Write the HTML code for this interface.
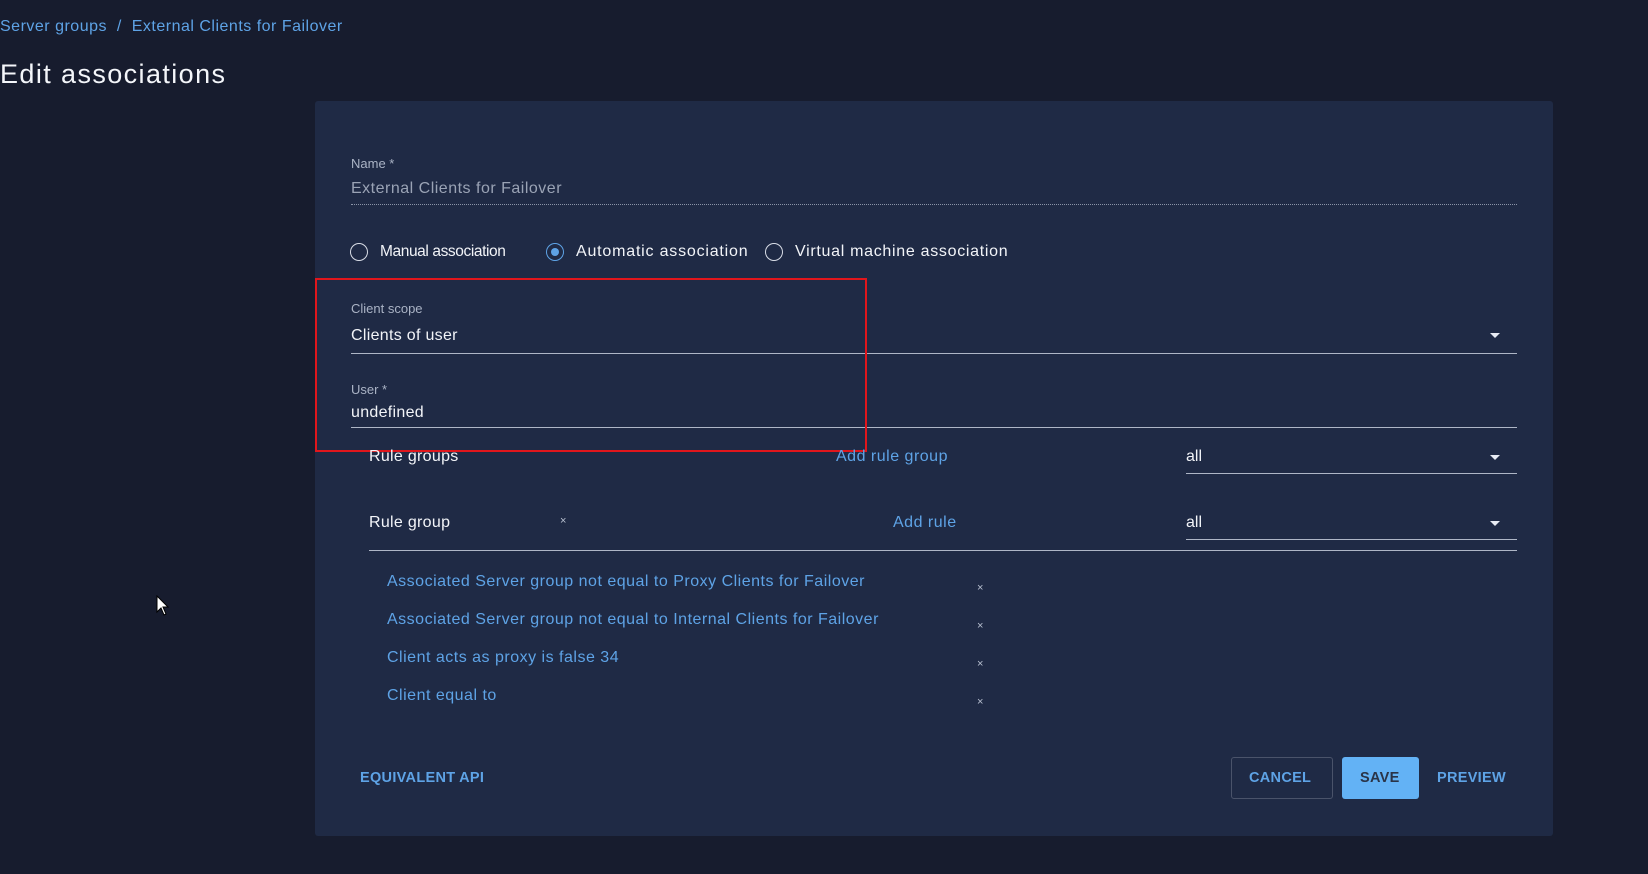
<!DOCTYPE html>
<html><head><meta charset="utf-8"><style>
*{margin:0;padding:0;box-sizing:border-box}
body{width:1648px;height:874px;background:#171c2e;font-family:"Liberation Sans",sans-serif;position:relative;overflow:hidden;color:#e8ecf4}
.a{position:absolute;white-space:nowrap}
.lnk{color:#5ea3e6}
.card{position:absolute;left:315px;top:101px;width:1238px;height:735px;background:#1f2a45;border-radius:3px}
.lbl{font-size:13px;color:#aab3c5}
.val{font-size:16px;color:#f2f4f8}
.line{position:absolute;height:1px;background:#aeb6c6}
.radio{position:absolute;width:18px;height:18px;border:1.5px solid #d8dce6;border-radius:50%}
.x{font-size:11px;color:#b8c0d0}
.arrow{position:absolute;width:0;height:0;border-left:5px solid transparent;border-right:5px solid transparent;border-top:5px solid #e8ecf4}
.btn{font-size:14.5px;font-weight:bold;letter-spacing:.3px}
.rl{font-size:16px;letter-spacing:.5px}
</style></head><body>
<div class="a lnk" style="left:0;top:18px;font-size:16px;letter-spacing:.5px">Server groups &nbsp;/ &nbsp;External Clients for Failover</div>
<div class="a" style="left:0;top:59px;font-size:27px;letter-spacing:1.4px;color:#f4f6fa">Edit associations</div>
<div class="card"></div>

<div class="a lbl" style="left:351px;top:156px">Name *</div>
<div class="a" style="left:351px;top:180px;font-size:16px;letter-spacing:.5px;color:#9aa3b5">External Clients for Failover</div>
<div class="a" style="left:351px;top:204px;width:1166px;border-top:1px dotted #8b94a8"></div>

<div class="radio" style="left:350px;top:243px"></div>
<div class="a val" style="left:380px;top:243px;font-size:15.5px;letter-spacing:-.4px">Manual association</div>
<div class="radio" style="left:546px;top:243px;border-color:#5ea3e6"><div style="position:absolute;left:3.5px;top:3.5px;width:8px;height:8px;border-radius:50%;background:#5ea3e6"></div></div>
<div class="a val" style="left:576px;top:243px;letter-spacing:.8px">Automatic association</div>
<div class="radio" style="left:765px;top:243px"></div>
<div class="a val" style="left:795px;top:243px;letter-spacing:.7px">Virtual machine association</div>

<div class="a lbl" style="left:351px;top:301px">Client scope</div>
<div class="a val" style="left:351px;top:327px;letter-spacing:.3px">Clients of user</div>
<div class="arrow" style="left:1490px;top:333px"></div>
<div class="line" style="left:351px;top:353px;width:1166px"></div>

<div class="a lbl" style="left:351px;top:382px">User *</div>
<div class="a val" style="left:351px;top:404px;letter-spacing:.3px">undefined</div>
<div class="line" style="left:351px;top:427px;width:1166px"></div>

<div class="a" style="left:315px;top:278px;width:552px;height:174px;border:2px solid #e0161c"></div>

<div class="a val" style="left:369px;top:448px;letter-spacing:.3px">Rule groups</div>
<div class="a lnk rl" style="left:836px;top:448px">Add rule group</div>
<div class="a val" style="left:1186px;top:448px">all</div>
<div class="arrow" style="left:1490px;top:455px"></div>
<div class="line" style="left:1186px;top:473px;width:331px"></div>

<div class="a val" style="left:369px;top:514px;letter-spacing:.3px">Rule group</div>
<div class="a x" style="left:560px;top:515px">×</div>
<div class="a lnk rl" style="left:893px;top:514px">Add rule</div>
<div class="a val" style="left:1186px;top:514px">all</div>
<div class="arrow" style="left:1490px;top:521px"></div>
<div class="line" style="left:1186px;top:539px;width:331px"></div>
<div class="line" style="left:369px;top:550px;width:1148px"></div>

<div class="a lnk rl" style="left:387px;top:573px">Associated Server group not equal to Proxy Clients for Failover</div>
<div class="a x" style="left:977px;top:582px">×</div>
<div class="a lnk rl" style="left:387px;top:611px">Associated Server group not equal to Internal Clients for Failover</div>
<div class="a x" style="left:977px;top:620px">×</div>
<div class="a lnk rl" style="left:387px;top:649px">Client acts as proxy is false 34</div>
<div class="a x" style="left:977px;top:658px">×</div>
<div class="a lnk rl" style="left:387px;top:687px">Client equal to</div>
<div class="a x" style="left:977px;top:696px">×</div>

<div class="a lnk btn" style="left:360px;top:770px">EQUIVALENT API</div>
<div class="a" style="left:1231px;top:757px;width:102px;height:42px;border:1px solid #4a536a;border-radius:3px"></div>
<div class="a lnk btn" style="left:1249px;top:770px">CANCEL</div>
<div class="a" style="left:1342px;top:757px;width:77px;height:42px;background:#63b2f5;border-radius:3px"></div>
<div class="a btn" style="left:1360px;top:770px;color:#2a3448">SAVE</div>
<div class="a lnk btn" style="left:1437px;top:770px">PREVIEW</div>

<svg class="a" style="left:156px;top:595px" width="14" height="22" viewBox="0 0 14 22"><path d="M1 1 L1 17 L5 13 L8 20 L10 19 L7 12 L12 12 Z" fill="#fff" stroke="#000" stroke-width="1"/></svg>
</body></html>
